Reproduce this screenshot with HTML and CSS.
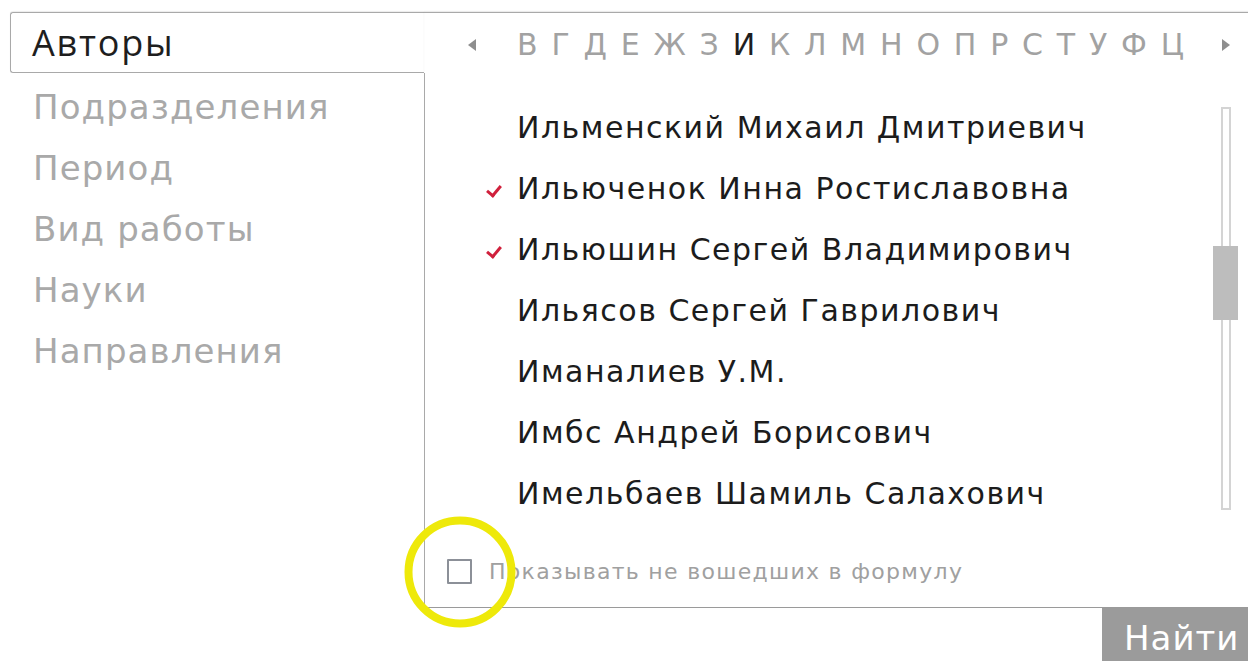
FILE: index.html
```html
<!DOCTYPE html>
<html lang="ru">
<head>
<meta charset="utf-8">
<title>Поиск публикаций</title>
<link rel="stylesheet" href="styles.css">
</head>
<body>
<div class="filter">
  <div class="tab tab-active">Авторы</div>
  <div class="alphabet">
    <span class="arrow arrow-left"></span>
    <ul class="letters">
      <li>В</li><li>Г</li><li>Д</li><li>Е</li><li>Ж</li><li>З</li><li class="current">И</li><li>К</li><li>Л</li><li>М</li><li>Н</li><li>О</li><li>П</li><li>Р</li><li>С</li><li>Т</li><li>У</li><li>Ф</li><li>Ц</li>
    </ul>
    <span class="arrow arrow-right"></span>
  </div>

  <ul class="tabs">
    <li>Подразделения</li>
    <li>Период</li>
    <li>Вид работы</li>
    <li>Науки</li>
    <li>Направления</li>
  </ul>

  <div class="panel">
    <div class="scroller">
      <ul class="authors">
        <li><span class="mark"></span>Ильменский Михаил Дмитриевич</li>
        <li class="checked"><span class="mark"></span>Ильюченок Инна Ростиславовна</li>
        <li class="checked"><span class="mark"></span>Ильюшин Сергей Владимирович</li>
        <li><span class="mark"></span>Ильясов Сергей Гаврилович</li>
        <li><span class="mark"></span>Иманалиев У.М.</li>
        <li><span class="mark"></span>Имбс Андрей Борисович</li>
        <li><span class="mark"></span>Имельбаев Шамиль Салахович</li>
      </ul>
      <div class="scrollbar">
        <div class="rail rail-top"></div>
        <div class="thumb"></div>
        <div class="rail rail-bottom"></div>
      </div>
    </div>
    <label class="option">
      <span class="box"></span>
      <span class="option-text">Показывать не вошедших в формулу</span>
    </label>
  </div>
</div>
<div class="actions">
  <button class="find">Найти</button>
</div>
</body>
</html>
```
FILE: styles.css
```css
* { box-sizing: border-box; }

html, body {
  margin: 0;
  padding: 0;
  background: #fff;
  overflow: hidden;
}

body {
  font-family: "DejaVu Sans", Verdana, sans-serif;
  color: #222;
  width: 1248px;
  height: 661px;
}

ul { list-style: none; margin: 0; padding: 0; }

.filter {
  display: grid;
  grid-template-columns: 414px 1fr;
  grid-template-rows: 61px 535px;
  margin: 12px 0 0 10px;
}

/* active tab joins the panel on its right side */
.tab-active {
  border: 1px solid #a9a9a9;
  border-right: none;
  border-radius: 3px 0 0 3px;
  box-shadow: 0 -1px 1px rgba(0,0,0,0.08);
  font-family: "Open Sans", "DejaVu Sans", sans-serif;
  font-size: 36px;
  letter-spacing: 1.8px;
  line-height: 60px;
  padding-left: 21px;
  color: #1e1e1e;
}

.alphabet {
  border-top: 1px solid #a9a9a9;
  box-shadow: 0 -1px 1px rgba(0,0,0,0.08);
  display: flex;
  align-items: center;
  padding: 3px 0 0 44px;
  color: #9a9a9a;
}

.arrow {
  width: 0;
  height: 0;
  border-top: 6px solid transparent;
  border-bottom: 6px solid transparent;
}
.arrow-left { border-right: 8px solid #8e8e8e; }
.arrow-right { border-left: 8px solid #8e8e8e; margin-left: 38px; }

.letters {
  display: flex;
  gap: 13.8px;
  margin-left: 41px;
  font-size: 30px;
}
.letters li { color: #a2a2a2; }
.letters .current { color: #1e1e1e; }

.tabs {
  padding-top: 4px;
  padding-left: 23px;
}
.tabs li {
  font-size: 34px;
  letter-spacing: 1.1px;
  line-height: 61px;
  color: #a9a9a9;
}

.panel {
  border-left: 1px solid #a9a9a9;
  border-bottom: 1px solid #9a9a9a;
  display: flex;
  flex-direction: column;
}

.scroller {
  display: flex;
  height: 450px;
}

.authors {
  flex: 1;
  padding-top: 24px;
  padding-left: 59px;
}
.authors li {
  display: flex;
  align-items: center;
  height: 61px;
  font-size: 30px;
  letter-spacing: 1.5px;
  color: #1c1c1c;
}

.mark {
  width: 33px;
  flex: none;
  display: flex;
  align-items: center;
}
.checked .mark::before {
  content: "";
  width: 11px;
  height: 6px;
  margin-left: 3px;
  margin-top: 2px;
  border-left: 3px solid #d0203c;
  border-bottom: 3px solid #d0203c;
  transform: rotate(-50deg);
}

.scrollbar {
  width: 25px;
  margin: 34px 10px 0 0;
  display: flex;
  flex-direction: column;
  align-items: center;
}
.rail {
  width: 10px;
  border: 2px solid #d4d4d4;
  background: #fff;
}
.rail-top { height: 139px; border-bottom: none; }
.rail-bottom { height: 190px; border-top: none; }
.thumb {
  width: 25px;
  height: 74px;
  background: #bdbdbd;
}

.option {
  display: flex;
  align-items: center;
  padding-left: 22px;
  margin-top: 36px;
  gap: 17px;
}
.box {
  position: relative;
  width: 25px;
  height: 25px;
  border: 2px solid #8c9098;
  border-radius: 1px;
  flex: none;
}
/* highlight ring drawn over the checkbox */
.box::after {
  content: "";
  position: absolute;
  left: 50%;
  top: 50%;
  width: 95px;
  height: 95px;
  transform: translate(-50%, -50%);
  border: 8px solid #eee90a;
  border-radius: 50%;
  z-index: 2;
}
.option-text {
  font-size: 22px;
  letter-spacing: 1.3px;
  color: #a0a0a0;
}

.actions {
  display: flex;
  justify-content: flex-end;
}
.find {
  width: 146px;
  height: 56px;
  border: none;
  border-radius: 0;
  background: #9b9b9b;
  color: #fff;
  font-family: "DejaVu Sans", Verdana, sans-serif;
  font-size: 34px;
  letter-spacing: 1px;
  padding: 4px 0 0 22px;
  text-align: left;
}
```
